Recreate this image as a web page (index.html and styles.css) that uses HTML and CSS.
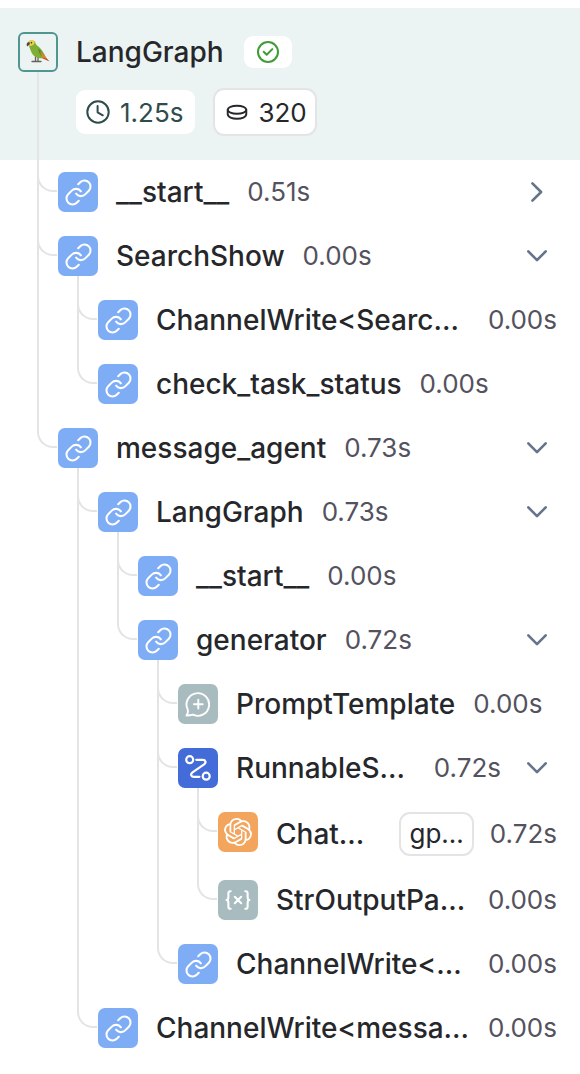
FILE: index.html
```html
<!DOCTYPE html>
<html lang="en">
<head>
<meta charset="utf-8">
<title>LangGraph trace</title>
<link rel="stylesheet" href="styles.css">
</head>
<body>
<svg class="sprite" width="0" height="0">
  <symbol id="chain" viewBox="0 0 24 24"><path d="M10 13a5 5 0 0 0 7.540.540l3-3a5 5 0 0 0-7.070-7.070l-1.720 1.710M14 11a5 5 0 0 0-7.540-.540l-3 3a5 5 0 0 0 7.070 7.070l1.710-1.710"/></symbol>
  <symbol id="prompt" viewBox="0 0 28 28"><path d="M2.500 25.500c1.400-2.200 1.800-3.700 1.200-6A11.300 11.300 0 1 1 9 24.700c-2 .6-4.200.8-6.500.8ZM14.300 9.800v8.800M9.900 14.200h8.800"/></symbol>
  <symbol id="route" viewBox="0 0 28 28"><circle cx="5.700" cy="5.700" r="3.500"/><circle cx="22.200" cy="22.200" r="3.500"/><path d="M12.300 5.800h6.500c3 0 3.600 2.800 1.300 4.600L8.500 18.300c-2.300 1.800-1.600 4.500 1.200 4.500h5.700"/></symbol>
  <symbol id="knot" viewBox="0 0 24 24"><path d="M22.282 9.821a5.985 5.985 0 0 0-.516-4.910 6.046 6.046 0 0 0-6.510-2.900A6.065 6.065 0 0 0 4.981 4.180a5.985 5.985 0 0 0-3.998 2.900 6.046 6.046 0 0 0 .743 7.097 5.980 5.980 0 0 0 .510 4.911 6.051 6.051 0 0 0 6.515 2.900A5.985 5.985 0 0 0 13.260 24a6.056 6.056 0 0 0 5.772-4.206 5.990 5.990 0 0 0 3.997-2.900 6.056 6.056 0 0 0-.747-7.073zM13.260 22.430a4.476 4.476 0 0 1-2.876-1.040l.141-.081 4.779-2.758a.795.795 0 0 0 .392-.681v-6.737l2.020 1.168a.071.071 0 0 1 .038.052v5.583a4.504 4.504 0 0 1-4.494 4.494zM3.600 18.304a4.470 4.470 0 0 1-.535-3.014l.142.085 4.783 2.759a.771.771 0 0 0 .780 0l5.843-3.369v2.332a.080.080 0 0 1-.033.062L9.740 19.950a4.500 4.500 0 0 1-6.140-1.646zM2.340 7.896a4.485 4.485 0 0 1 2.366-1.973V11.600a.766.766 0 0 0 .388.676l5.815 3.355-2.020 1.168a.076.076 0 0 1-.071 0l-4.830-2.786A4.504 4.504 0 0 1 2.340 7.872zm16.597 3.855l-5.833-3.387L15.119 7.200a.076.076 0 0 1 .071 0l4.830 2.791a4.494 4.494 0 0 1-.676 8.105v-5.678a.790.790 0 0 0-.407-.667zm2.010-3.023l-.141-.085-4.774-2.782a.776.776 0 0 0-.785 0L9.409 9.230V6.897a.066.066 0 0 1 .028-.061l4.830-2.787a4.500 4.500 0 0 1 6.680 4.660zm-12.640 4.135l-2.020-1.164a.080.080 0 0 1-.038-.057V6.075a4.500 4.500 0 0 1 7.375-3.453l-.142.080-4.778 2.758a.795.795 0 0 0-.393.681zm1.097-2.365l2.602-1.500 2.607 1.500v2.999l-2.597 1.500-2.607-1.500z"/></symbol>
  <symbol id="variable" viewBox="0 0 28 24"><path d="M6 2.500H5.500Q3.500 2.500 3.500 5v3.500Q3.500 12 1.500 12q2 0 2 3.500V19q0 2.500 2 2.500H6M22 2.500h.5q2 0 2 2.500v3.500q0 3.500 2 3.500-2 0-2 3.500V19q0 2.500-2 2.500H22M10.500 8.500l7 7M17.500 8.500l-7 7"/></symbol>
  <symbol id="down" viewBox="0 0 24 24"><path d="M3.300 7.400l8.700 8.700 8.700-8.700"/></symbol>
  <symbol id="right" viewBox="0 0 24 24"><path d="M7.400 3.300l8.700 8.700-8.700 8.700"/></symbol>
</svg>
<main class="tree">
  <header class="root">
    <div class="node"><span class="tile parrot"><svg width="26" height="26" viewBox="0 0 26 26">
      <path d="M7 22.500h9M10.500 18v4.500M13 18v4.500" fill="none" stroke="#66615c" stroke-width="1.300"/>
      <path d="M17 14l7.500 8.500-4-1.700-6-2.800Z" fill="#c64a22"/>
      <path d="M3 3.500C4.500.5 9.500.2 10.500 4c.4 1.800 2 2.600 4 4.500 2.700 2.500 4.500 6 6.500 10-3 1-7.500 1.300-10.500-.5C6.500 15.500 5.600 11 4 7Z" fill="#7fae34"/>
      <path d="M13 9.500c3.500 2 5.500 5.500 7.500 9.500-4-1-6.500-4-7.500-9.500Z" fill="#568a2c"/>
      <path d="M15 12.500c2.500 1 4.500 4 6.600 7.700l-4.200-2Z" fill="#df852d"/>
      <path d="M3 4C4.300.8 8.500.5 9.600 3.200 9.500 5.500 7 7 4.500 7Z" fill="#f0cf45"/>
      <path d="M4.200 3C1.800 3.200 1 5.300 2.300 7.500c.7-1 2.400-1.500 2.600-3Z" fill="#4b4545"/>
      <circle cx="6.400" cy="3.800" r=".8" fill="#28231d"/>
    </svg></span><i class="stem"></i></div>
    <div class="summary">
      <div class="title"><span class="name">LangGraph</span><span class="badge ok"><svg width="24" height="24" viewBox="0 0 24 24"><circle cx="12" cy="12" r="10"/><path d="M7.700 11.700l3 3 5.600-5.600"/></svg></span></div>
      <div class="stats">
        <span class="badge latency"><svg width="26" height="26" viewBox="0 0 26 26"><circle cx="13" cy="13" r="10.700"/><path d="M12.600 7v6.300l5.200 3"/></svg>1.25s</span>
        <span class="badge tokens"><svg width="24" height="24" viewBox="0 0 24 24"><ellipse cx="12" cy="9.800" rx="9.300" ry="4"/><path d="M2.700 9.800v4.200c0 6.300 18.600 6.300 18.600 0V9.800"/></svg>320</span>
      </div>
    </div>
  </header>

  <div class="row"><i class="guide line"><i class="elbow"></i></i><div class="node"><span class="tile chain"><svg><use href="#chain"/></svg></span></div><div class="label"><span class="name">__start__</span><span class="time">0.51s</span><svg class="toggle"><use href="#right"/></svg></div></div>
  <div class="row"><i class="guide line"><i class="elbow"></i></i><div class="node"><span class="tile chain"><svg><use href="#chain"/></svg></span><i class="stem"></i></div><div class="label"><span class="name">SearchShow</span><span class="time">0.00s</span><svg class="toggle"><use href="#down"/></svg></div></div>
  <div class="row"><i class="guide line"></i><i class="guide line"><i class="elbow"></i></i><div class="node"><span class="tile chain"><svg><use href="#chain"/></svg></span></div><div class="label"><span class="name cut">ChannelWrite&lt;Searc...</span><span class="time">0.00s</span></div></div>
  <div class="row"><i class="guide line"></i><i class="guide"><i class="elbow"></i></i><div class="node"><span class="tile chain"><svg><use href="#chain"/></svg></span></div><div class="label"><span class="name">check_task_status</span><span class="time">0.00s</span></div></div>
  <div class="row"><i class="guide"><i class="elbow"></i></i><div class="node"><span class="tile chain"><svg><use href="#chain"/></svg></span><i class="stem"></i></div><div class="label"><span class="name">message_agent</span><span class="time">0.73s</span><svg class="toggle"><use href="#down"/></svg></div></div>
  <div class="row"><i class="guide"></i><i class="guide line"><i class="elbow"></i></i><div class="node"><span class="tile chain"><svg><use href="#chain"/></svg></span><i class="stem"></i></div><div class="label"><span class="name">LangGraph</span><span class="time">0.73s</span><svg class="toggle"><use href="#down"/></svg></div></div>
  <div class="row"><i class="guide"></i><i class="guide line"></i><i class="guide line"><i class="elbow"></i></i><div class="node"><span class="tile chain"><svg><use href="#chain"/></svg></span></div><div class="label"><span class="name">__start__</span><span class="time">0.00s</span></div></div>
  <div class="row"><i class="guide"></i><i class="guide line"></i><i class="guide"><i class="elbow"></i></i><div class="node"><span class="tile chain"><svg><use href="#chain"/></svg></span><i class="stem"></i></div><div class="label"><span class="name">generator</span><span class="time">0.72s</span><svg class="toggle"><use href="#down"/></svg></div></div>
  <div class="row"><i class="guide"></i><i class="guide line"></i><i class="guide"></i><i class="guide line"><i class="elbow"></i></i><div class="node"><span class="tile gray"><svg><use href="#prompt"/></svg></span></div><div class="label"><span class="name">PromptTemplate</span><span class="time">0.00s</span></div></div>
  <div class="row"><i class="guide"></i><i class="guide line"></i><i class="guide"></i><i class="guide line"><i class="elbow"></i></i><div class="node"><span class="tile sequence"><svg><use href="#route"/></svg></span><i class="stem"></i></div><div class="label"><span class="name cut">RunnableS...</span><span class="time">0.72s</span><svg class="toggle"><use href="#down"/></svg></div></div>
  <div class="row"><i class="guide"></i><i class="guide line"></i><i class="guide"></i><i class="guide line"></i><i class="guide line"><i class="elbow"></i></i><div class="node"><span class="tile model"><svg><use href="#knot"/></svg></span></div><div class="label"><span class="name cut">Chat...</span><span class="chip">gp...</span><span class="time">0.72s</span></div></div>
  <div class="row"><i class="guide"></i><i class="guide line"></i><i class="guide"></i><i class="guide line"></i><i class="guide"><i class="elbow"></i></i><div class="node"><span class="tile gray parser"><svg><use href="#variable"/></svg></span></div><div class="label"><span class="name cut">StrOutputPa...</span><span class="time">0.00s</span></div></div>
  <div class="row"><i class="guide"></i><i class="guide line"></i><i class="guide"></i><i class="guide"><i class="elbow"></i></i><div class="node"><span class="tile chain"><svg><use href="#chain"/></svg></span></div><div class="label"><span class="name cut">ChannelWrite&lt;...</span><span class="time">0.00s</span></div></div>
  <div class="row"><i class="guide"></i><i class="guide"><i class="elbow"></i></i><div class="node"><span class="tile chain"><svg><use href="#chain"/></svg></span></div><div class="label"><span class="name cut">ChannelWrite&lt;messa...</span><span class="time">0.00s</span></div></div>
</main>
</body>
</html>
```
FILE: styles.css
```css
* { box-sizing: border-box; }
body { margin: 0; background: #fff; color: #26272b; font-family: Inter, sans-serif; }
svg { display: block; flex: none; fill: none; stroke: currentColor; stroke-linecap: round; stroke-linejoin: round; }
.sprite { display: none; }
.tree { width: 580px; padding-top: 8px; }
.root { display: flex; height: 152px; padding: 12px 0 0 18px; background: #ebf4f2; }
.row { display: flex; min-height: 64px; padding-left: 18px; }
.guide { flex: none; width: 21px; margin-left: 19px; border-left: 2px solid transparent; }
.guide.line { border-left-color: #e4e4e7; }
.elbow { display: block; width: 20px; height: 32px; margin-left: -2px; border: solid #e4e4e7; border-width: 0 0 2px 2px; border-bottom-left-radius: 16px; }
.node { display: flex; flex: none; flex-direction: column; width: 40px; padding-top: 12px; }
.stem { flex: 1; width: 2px; margin-left: 19px; background: #e4e4e7; }
.tile { display: flex; flex: none; align-items: center; justify-content: center; width: 40px; height: 40px; border-radius: 7px; color: #fff; }
.tile.parrot { border: 2px solid #4f9691; border-radius: 6px; }
.parrot svg { stroke: none; }
.chain { background: #7eadf6; }
.chain svg { width: 29px; height: 29px; stroke-width: 1.700; }
.gray { background: #a8bbbf; }
.gray svg { width: 28px; height: 28px; stroke-width: 1.900; }
.parser svg { width: 26px; height: 22px; stroke-width: 2.300; }
.sequence { background: #446cd9; }
.sequence svg { width: 28px; height: 28px; stroke-width: 2.200; }
.model { background: #f3a45d; }
.model svg { width: 28px; height: 28px; fill: #fff; stroke: none; }
.label { display: flex; flex: 1; align-items: center; min-width: 0; padding: 12px 23px 12px 18px; }
.name { font-size: 28px; font-weight: 500; line-height: 40px; white-space: nowrap; }
.name.cut { flex: 1; min-width: 0; }
.time { margin-left: 18px; color: #54525e; font-size: 26px; line-height: 40px; }
.toggle { width: 24px; height: 24px; margin-right: 8px; margin-left: auto; color: #64748b; stroke-width: 2.600; }
.cut ~ .toggle { margin-left: 24px; }
.chip { padding: 0 8px; border: 2px solid #e4e4e7; border-radius: 11px; font-size: 26px; line-height: 40px; }
.chip + .time { margin-left: 16px; }
.summary { flex: 1; padding: 12px 0 0 18px; }
.title { display: flex; align-items: center; gap: 20px; height: 40px; }
.badge { display: flex; align-items: center; border-radius: 9px; background: #fff; font-size: 26px; }
.ok { justify-content: center; width: 48px; height: 32px; color: #3f9c35; stroke-width: 2; }
.stats { display: flex; gap: 18px; margin-top: 16px; }
.latency { height: 44px; margin-top: 2px; padding: 0 12px 0 9px; gap: 9px; color: #2f4c4c; stroke-width: 2; }
.tokens { height: 48px; padding: 0 8px 0 10px; gap: 9px; border: 2px solid #e4e4e7; border-radius: 11px; stroke-width: 1.900; }
```
